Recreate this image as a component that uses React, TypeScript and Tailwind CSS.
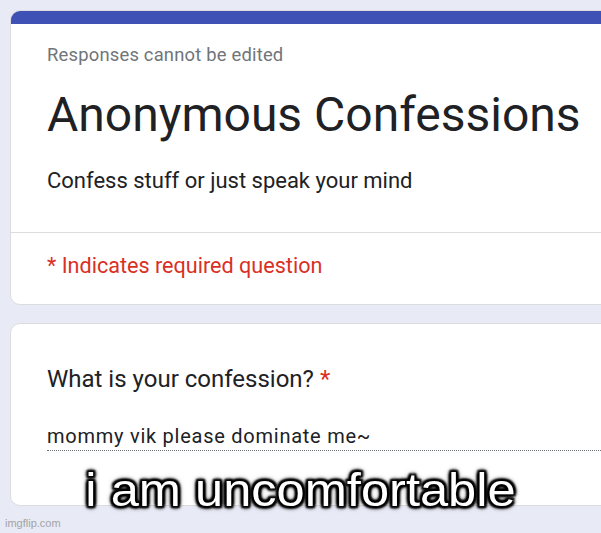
export default function App() {
  return (
    <div className="relative w-[601px] h-[533px] overflow-hidden bg-[#e8eaf6] font-['Roboto',sans-serif]">
      {/* Header card */}
      <div className="ml-[10px] mt-[10px] w-[640px] rounded-[10px] overflow-hidden bg-white border border-[#dadce0]">
        <div className="h-[14px] bg-[#3f51b5] -mt-px -mx-px" />
        <div className="pl-[36px] pt-[19px]">
          <div className="text-[18.4px] leading-[24px] text-[#70757a] tracking-[0.2px]">Responses cannot be edited</div>
          <h1 className="mt-[20px] text-[48px] leading-[56px] text-[#202124]">Anonymous Confessions</h1>
          <p className="mt-[24px] text-[22px] leading-[28px] text-[#202124]">Confess stuff or just speak your mind</p>
        </div>
        <div className="mt-[37px] border-t border-[#dadce0] pl-[36px] pt-[19px] pb-[24px]">
          <div className="text-[21.6px] leading-[28px] text-[#d93025]">* Indicates required question</div>
        </div>
      </div>

      {/* Question card */}
      <div className="ml-[10px] mt-[18px] w-[640px] h-[183px] rounded-[10px] bg-white border border-[#dadce0] pl-[36px] pt-[40px]">
        <div className="text-[24px] leading-[30px] text-[#202124]">
          What is your confession? <span className="text-[#d93025]">*</span>
        </div>
        <div className="mt-[29px] text-[20px] leading-[26px] tracking-[0.75px] text-[#202124] border-b border-dotted border-[#70757a] pb-[1px]">
          mommy vik please dominate me~
        </div>
      </div>

      {/* Meme caption */}
      <div className="absolute left-0 right-0 top-[462px] text-center text-white text-[46px] leading-[56px] scale-x-[1.1] font-['Liberation_Sans',Arial,sans-serif] [text-shadow:2px_2px_2px_#000,-2px_-2px_2px_#000,2px_-2px_2px_#000,-2px_2px_2px_#000,0_2px_3px_#000,0_-2px_3px_#000,2px_0_3px_#000,-2px_0_3px_#000,0_0_6px_#000]">
        i am uncomfortable
      </div>

      <div className="absolute left-[5px] top-[516px] text-[11px] leading-[14px] text-[#a3a3a3] font-['Liberation_Sans',Arial,sans-serif]">
        imgflip.com
      </div>
    </div>
  );
}
